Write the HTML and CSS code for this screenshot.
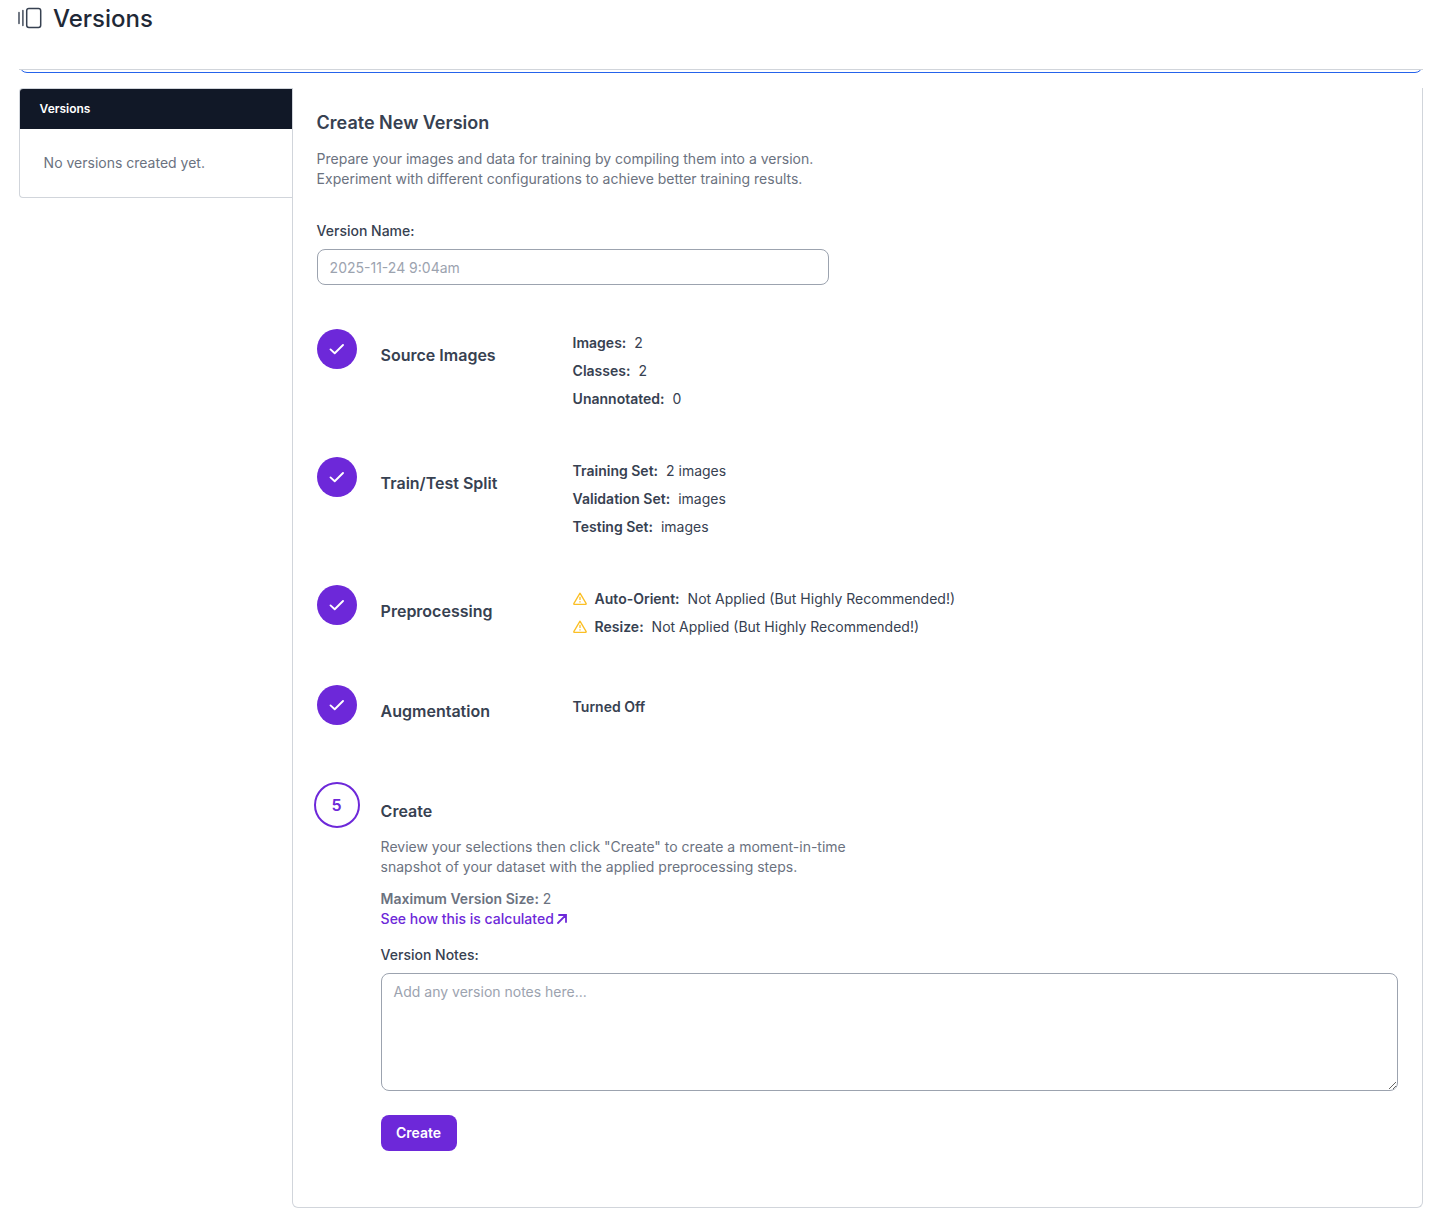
FILE: index.html
```html
<!DOCTYPE html>
<html lang="en">
<head>
  <meta charset="UTF-8">
  <title>Versions</title>
  <link rel="stylesheet" href="styles.css">
</head>
<body>
  <svg class="sprite">
    <symbol id="check" viewBox="0 0 16 16">
      <path d="M1.5 8.4 L5.7 12.2 L14 4" fill="none" stroke="currentColor" stroke-width="1.9" stroke-linecap="round" stroke-linejoin="round"/>
    </symbol>
    <symbol id="warning" viewBox="0 0 14 14">
      <path d="M7 1.2 L13.2 11.7 Q13.2 12.4 12.6 12.4 H1.4 Q0.8 12.4 0.8 11.7 Z" fill="none" stroke="currentColor" stroke-width="1.3" stroke-linejoin="round"/>
      <path d="M7 4.8 V8.1 M7 9.2 V10.5" stroke="currentColor" stroke-width="1.3"/>
    </symbol>
  </svg>

  <header class="page-header">
    <svg class="page-icon" width="24" height="22" viewBox="0 0 24 22" fill="none" stroke="currentColor" stroke-linecap="round">
      <path d="M1 5.5 V16.5 M4.9 3.5 V18.5" stroke-width="1.4"/>
      <rect x="8.7" y="1.5" width="14" height="19" rx="2.2" stroke-width="1.5"/>
    </svg>
    <h1>Versions</h1>
  </header>

  <div class="banner-clip">
    <div class="banner"></div>
  </div>

  <div class="content">
    <aside class="sidebar">
      <div class="sidebar-title">Versions</div>
      <div class="sidebar-empty">No versions created yet.</div>
    </aside>

    <main class="main">
      <h2>Create New Version</h2>
      <p class="intro">Prepare your images and data for training by compiling them into a version.<br>Experiment with different configurations to achieve better training results.</p>

      <label class="label" for="versionName">Version Name:</label>
      <input class="name-input" type="text" id="versionName" placeholder="2025-11-24 9:04am">

      <div class="step">
        <div class="badge"><svg class="check"><use href="#check"/></svg></div>
        <h3>Source Images</h3>
        <div class="details">
          <div><b>Images:</b>2</div>
          <div><b>Classes:</b>2</div>
          <div><b>Unannotated:</b>0</div>
        </div>
      </div>

      <div class="step">
        <div class="badge"><svg class="check"><use href="#check"/></svg></div>
        <h3>Train/Test Split</h3>
        <div class="details">
          <div><b>Training Set:</b>2 images</div>
          <div><b>Validation Set:</b>images</div>
          <div><b>Testing Set:</b>images</div>
        </div>
      </div>

      <div class="step">
        <div class="badge"><svg class="check"><use href="#check"/></svg></div>
        <h3>Preprocessing</h3>
        <div class="details">
          <div><svg class="warning"><use href="#warning"/></svg><b>Auto-Orient:</b>Not Applied (But Highly Recommended!)</div>
          <div><svg class="warning"><use href="#warning"/></svg><b>Resize:</b>Not Applied (But Highly Recommended!)</div>
        </div>
      </div>

      <div class="step">
        <div class="badge"><svg class="check"><use href="#check"/></svg></div>
        <h3>Augmentation</h3>
        <div class="details details-off">
          <div><b>Turned Off</b></div>
        </div>
      </div>

      <div class="step step-create">
        <div class="badge badge-current">5</div>
        <div class="create">
          <h3>Create</h3>
          <p class="review">Review your selections then click "Create" to create a moment-in-time<br>snapshot of your dataset with the applied preprocessing steps.</p>
          <div class="max-size"><b>Maximum Version Size:</b> 2</div>
          <a class="calc-link" href="#">See how this is calculated<svg width="10" height="10" viewBox="0 0 10 10" fill="none" stroke="currentColor" stroke-width="1.8" stroke-linecap="round"><path d="M1 9 L8.8 1.2 M2 1 H9 V8"/></svg></a>
          <label class="label" for="versionNotes">Version Notes:</label>
          <textarea class="notes" id="versionNotes" placeholder="Add any version notes here..."></textarea>
          <button class="btn-create">Create</button>
        </div>
      </div>
    </main>
  </div>
</body>
</html>
```
FILE: styles.css
```css
* {
  box-sizing: border-box;
}

body {
  margin: 0;
  font-family: Inter, sans-serif;
  font-size: 14px;
  line-height: 20px;
  color: #374151;
  background: white;
}

h1, h2, h3, p {
  margin: 0;
}

b {
  font-weight: 600;
}

.sprite {
  display: none;
}

.page-header {
  display: flex;
  align-items: flex-start;
  gap: 11px;
  height: 69px;
  padding: 3px 18px;
}

.page-icon {
  margin-top: 4px;
  color: #374151;
}

h1 {
  font-size: 24px;
  line-height: 32px;
  font-weight: 500;
  color: #1f2937;
}

/* only the bottom edge of the banner shows under the header */
.banner-clip {
  display: flex;
  align-items: flex-end;
  height: 4px;
  margin: 0 8px 15px 19px;
  border-top: 1px solid #d1d5db;
  overflow: hidden;
}

.banner {
  flex: none;
  width: 100%;
  height: 20px;
  border: 1px solid #2563eb;
  border-radius: 8px;
}

.content {
  display: flex;
  align-items: flex-start;
  margin: 0 8px 0 18.6px;
}

.sidebar {
  width: 273px;
  height: 110px;
  border: 1px solid #d1d5db;
  border-right: none;
  border-radius: 4px 0 0 4px;
  overflow: hidden;
}

.sidebar-title {
  height: 40px;
  padding: 0 20px;
  line-height: 40px;
  font-size: 12px;
  font-weight: 600;
  color: white;
  background: #111827;
}

.sidebar-empty {
  padding: 24px;
  color: #6b7280;
}

.main {
  flex: 1;
  height: 1120px;
  padding: 21px 24px 20px;
  border: 1px solid #d1d5db;
  border-top: none;
  border-radius: 0 0 6px 6px;
}

h2 {
  font-size: 18px;
  line-height: 28px;
  font-weight: 600;
}

.intro {
  margin: 12px 0 32px;
  color: #6b7280;
}

.label {
  display: block;
  font-weight: 500;
}

.name-input {
  display: block;
  width: 512px;
  height: 36px;
  margin: 8px 0 44px;
  padding: 1px 12px 0;
  font: inherit;
  border: 1px solid #9ca3af;
  border-radius: 8px;
}

::placeholder {
  color: #9ca3af;
}

.step {
  display: flex;
  align-items: flex-start;
  margin-bottom: 44px;
}

.badge {
  display: flex;
  flex: none;
  align-items: center;
  justify-content: center;
  width: 40px;
  height: 40px;
  margin-right: 24px;
  border-radius: 50%;
  color: white;
  background: #6d28d9;
}

.check {
  width: 16px;
  height: 16px;
}

h3 {
  width: 192px;
  margin-top: 14px;
  font-size: 16px;
  line-height: 24px;
  font-weight: 600;
}

.details {
  display: flex;
  flex-direction: column;
  min-height: 56px;
}

.details-off {
  padding-top: 8px;
}

.details div {
  display: flex;
  align-items: center;
  height: 28px;
}

.details b {
  margin-right: 8px;
}

.warning {
  width: 14px;
  height: 14px;
  margin-right: 8px;
  color: #fbbf24;
}

.badge-current {
  width: 46px;
  height: 46px;
  margin: -3px 21px 0 -3px;
  border: 2px solid #6d28d9;
  font-size: 16px;
  font-weight: 600;
  color: #6d28d9;
  background: white;
}

.create {
  flex: 1;
  color: #6b7280;
}

.create h3,
.create .label {
  color: #374151;
}

.review {
  margin: 14px 0 12px;
}

.calc-link {
  display: flex;
  align-items: center;
  gap: 3px;
  margin-bottom: 16px;
  font-weight: 500;
  color: #6d28d9;
  text-decoration: none;
}

.notes {
  display: block;
  width: 100%;
  height: 118px;
  margin: 8px 0 24px;
  padding: 8px 12px;
  font: inherit;
  border: 1px solid #9ca3af;
  border-radius: 8px;
}

.btn-create {
  width: 76px;
  height: 36px;
  font: inherit;
  font-weight: 600;
  color: white;
  background: #6d28d9;
  border: none;
  border-radius: 8px;
}
```
